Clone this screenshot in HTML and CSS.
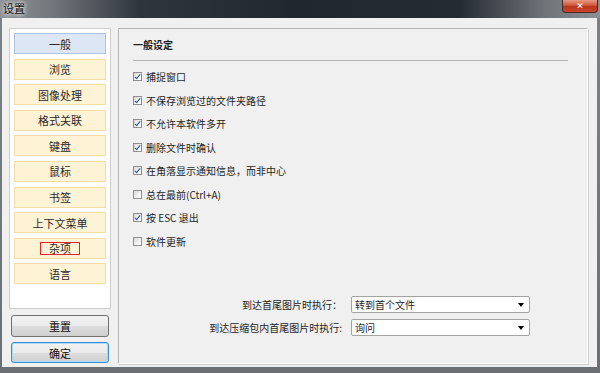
FILE: index.html
```html
<!DOCTYPE html>
<html lang="zh-CN">
<head>
  <meta charset="UTF-8">
  <title>设置</title>
  <link rel="stylesheet" href="styles.css">
</head>
<body>
  <header class="TitleBar">
    <span class="TitleText">设置</span>
    <button class="CloseButton">✕</button>
  </header>

  <div class="Client">
    <aside class="SideColumn">
      <nav class="SideList">
        <a class="SideItem active">一般</a>
        <a class="SideItem">浏览</a>
        <a class="SideItem">图像处理</a>
        <a class="SideItem">格式关联</a>
        <a class="SideItem">键盘</a>
        <a class="SideItem">鼠标</a>
        <a class="SideItem">书签</a>
        <a class="SideItem">上下文菜单</a>
        <a class="SideItem"><span class="Marked">杂项</span></a>
        <a class="SideItem">语言</a>
      </nav>
      <button class="PushButton reset">重置</button>
      <button class="PushButton ok">确定</button>
    </aside>

    <main class="SettingsPanel">
      <div class="PanelTitle">一般设定</div>

      <div class="CheckList">
        <label class="CheckRow"><span class="Box on"></span>捕捉窗口</label>
        <label class="CheckRow"><span class="Box on"></span>不保存浏览过的文件夹路径</label>
        <label class="CheckRow"><span class="Box on"></span>不允许本软件多开</label>
        <label class="CheckRow"><span class="Box on"></span>删除文件时确认</label>
        <label class="CheckRow"><span class="Box on"></span>在角落显示通知信息，而非中心</label>
        <label class="CheckRow"><span class="Box"></span>总在最前(Ctrl+A)</label>
        <label class="CheckRow"><span class="Box on"></span>按 ESC 退出</label>
        <label class="CheckRow"><span class="Box"></span>软件更新</label>
      </div>

      <div class="SelectGrid">
        <span class="SelectLabel">到达首尾图片时执行：</span>
        <div class="Combo">转到首个文件</div>
        <span class="SelectLabel">到达压缩包内首尾图片时执行:</span>
        <div class="Combo">询问</div>
      </div>
    </main>
  </div>
</body>
</html>
```

FILE: styles.css
```css
* {
  margin: 0;
  padding: 0;
  box-sizing: border-box;
}

body {
  width: 600px;
  height: 373px;
  overflow: hidden;
  font-family: "Noto Sans CJK SC", "Noto Sans", sans-serif;
  background: linear-gradient(180deg, #7d8286 0%, #6a6f74 100%);
  color: #1e1e1e;
}

/* Title bar */
.TitleBar {
  height: 18px;
  display: flex;
  align-items: flex-start;
  background: linear-gradient(90deg, #8f9397 0, #73787d 50px, #2f353d 140px, #21272f 300px, #252b33 460px, #6f7479 545px, #8c9094 600px);
}

.TitleText {
  font-size: 11px;
  line-height: 16px;
  padding-left: 3px;
  color: #111;
  text-shadow: 0 0 4px #fff, 0 0 6px rgba(255, 255, 255, 0.8);
}

.CloseButton {
  margin-left: auto;
  margin-right: 2px;
  width: 36px;
  height: 13px;
  border: 1px solid #4c2a24;
  border-top: none;
  border-radius: 0 0 4px 4px;
  background: linear-gradient(180deg, #e59a85 0%, #d0563b 45%, #b8331b 55%, #c9462b 100%);
  color: #fff;
  font-size: 9px;
  font-weight: 700;
  line-height: 11px;
  font-family: "DejaVu Sans", sans-serif;
}

/* Client area */
.Client {
  margin: 0 3px 0 2px;
  height: 349px;
  background: #f0f0f0;
  display: flex;
  gap: 7px;
  padding: 10px 9px 3px 7px;
}

.SideColumn {
  width: 102px;
  display: flex;
  flex-direction: column;
}

.SideList {
  height: 281px;
  background: #fff;
  border: 1px solid #cdcdcd;
  padding: 4px;
  display: flex;
  flex-direction: column;
  gap: 4.6px;
}

.SideItem {
  height: 21px;
  display: flex;
  align-items: center;
  justify-content: center;
  font-size: 11px;
  color: #2a2a2a;
  background: #fff3d6;
  border: 1px solid #f4dca6;
}

.SideItem.active {
  background: #dde6f4;
  border-color: #aec3e2;
}

.Marked {
  width: 40px;
  height: 13px;
  line-height: 11px;
  text-align: center;
  border: 1.5px solid #e2232a;
}

.PushButton {
  margin: 0 2px;
  font-family: inherit;
  font-size: 11px;
  color: #111;
  border: 1px solid #707070;
  border-radius: 3px;
  background: linear-gradient(180deg, #f2f2f2 0%, #ebebeb 50%, #dddddd 51%, #cfcfcf 100%);
}

.PushButton.reset {
  height: 22px;
  margin-top: 6px;
}

.PushButton.ok {
  height: 21px;
  margin-top: 5px;
  border-color: #3c8ccf;
  box-shadow: inset 0 0 0 1px #a8dcf5;
}

/* Settings panel */
.SettingsPanel {
  flex: 1;
  display: flex;
  flex-direction: column;
  border: 1px solid #b5b5b5;
  border-right-color: #fff;
  border-bottom-color: #fff;
  box-shadow: 1px 1px 0 #d0d0d0;
  padding: 0 0 27px 14px;
}

.PanelTitle {
  height: 32px;
  margin-right: 19px;
  display: flex;
  align-items: center;
  font-size: 10px;
  font-weight: 700;
  border-bottom: 1px solid #b5b5b5;
}

.CheckList {
  padding-top: 4px;
}

.CheckRow {
  height: 23.5px;
  display: flex;
  align-items: center;
  gap: 4px;
  font-size: 10px;
}

.Box {
  width: 9px;
  height: 9px;
  border: 1px solid #8e8f8f;
  background: linear-gradient(135deg, #d8d8d8 0%, #f2f2f2 60%, #fff 100%);
  position: relative;
}

.Box.on::after {
  content: '';
  position: absolute;
  left: 2px;
  top: 0px;
  width: 2px;
  height: 5px;
  border: solid #2b4ea8;
  border-width: 0 1.5px 1.5px 0;
  transform: rotate(40deg);
}

.SelectGrid {
  margin-top: auto;
  align-self: flex-end;
  margin-right: 57px;
  display: grid;
  grid-template-columns: auto 179px;
  column-gap: 9px;
  row-gap: 6px;
  align-items: center;
}

.SelectLabel {
  font-size: 10px;
  text-align: right;
}

.Combo {
  height: 17px;
  font-size: 10px;
  line-height: 15px;
  padding-left: 3px;
  background: #fff;
  border: 1px solid #a3a3a3;
  border-radius: 2px;
  position: relative;
}

.Combo::after {
  content: '';
  position: absolute;
  right: 5px;
  top: 6px;
  border-left: 3px solid transparent;
  border-right: 3px solid transparent;
  border-top: 4px solid #000;
}
```
